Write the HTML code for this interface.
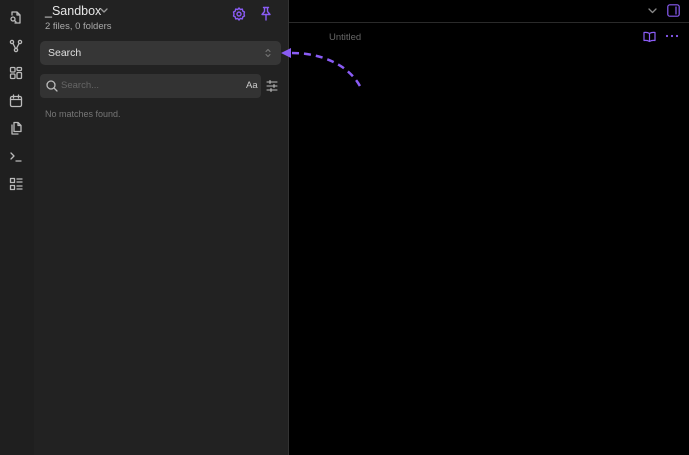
<html><head><style>
body{margin:0;width:689px;height:455px;background:#000;font-family:"Liberation Sans",sans-serif;position:relative;overflow:hidden}
.rib{position:absolute;left:0;top:0;width:34px;height:455px;background:#1f1f1f}
.pan{position:absolute;left:34px;top:0;width:254px;height:455px;background:#222}
.edge{position:absolute;left:288px;top:0;width:1px;height:455px;background:#333}
svg.i{position:absolute;fill:none;stroke:#bbb;stroke-width:1.3;stroke-linecap:round;stroke-linejoin:round}
.t{position:absolute;color:#ddd;white-space:nowrap;line-height:1}
</style></head><body>
<div class="rib"></div><div class="pan"></div><div class="edge"></div>
<div style="position:absolute;left:289px;top:22px;width:400px;height:1px;background:#2a2a2a"></div>
<svg class="i" style="left:9px;top:10px" width="14" height="14" viewBox="0 0 14 14"><path d="M3 5V2h5l3 3v8H6M8 2v3h3"/><circle cx="4" cy="9" r="2"/><path d="M5.5 10.5l1.5 1.5"/></svg>
<svg class="i" style="left:9px;top:39px" width="14" height="14" viewBox="0 0 14 14"><circle cx="3" cy="3" r="1.6"/><circle cx="11" cy="3" r="1.6"/><circle cx="7" cy="11" r="1.6"/><path d="M4 4.5l2.5 5M10 4.5l-2.5 5"/></svg>
<svg class="i" style="left:9px;top:66px" width="14" height="14" viewBox="0 0 14 14"><rect x="1.5" y="1.5" width="4.5" height="4.5" rx="1"/><rect x="8" y="1.5" width="4.5" height="3" rx="1"/><rect x="1.5" y="8" width="4.5" height="4.5" rx="1"/><rect x="8" y="6.5" width="4.5" height="6" rx="1"/></svg>
<svg class="i" style="left:9px;top:94px" width="14" height="14" viewBox="0 0 14 14"><rect x="1.5" y="2.5" width="11" height="10" rx="1.5"/><path d="M1.5 5.5h11M4.5 1v3M9.5 1v3"/></svg>
<svg class="i" style="left:9px;top:121px" width="14" height="14" viewBox="0 0 14 14"><path d="M5 1.5h4l3 3v6H5zM9 1.5v3h3M3 4v9h6"/></svg>
<svg class="i" style="left:9px;top:149px" width="14" height="14" viewBox="0 0 14 14"><path d="M2 4l3 3-3 3M7 12h5"/></svg>
<svg class="i" style="left:9px;top:177px" width="14" height="14" viewBox="0 0 14 14"><rect x="1.5" y="1.5" width="4" height="4"/><rect x="1.5" y="8.5" width="4" height="4"/><path d="M8 2h5M8 5h5M8 9h5M8 12h5"/></svg>
<div class="t" style="left:45px;top:5px;font-size:12.5px;color:#e6e6e6">_Sandbox</div>
<svg class="i" style="left:100px;top:8px;stroke:#999" width="8" height="6" viewBox="0 0 8 6"><path d="M1 1l3 3 3-3"/></svg>
<div class="t" style="left:45px;top:22px;font-size:9.5px;color:#aaa">2 files, 0 folders</div>
<svg class="i" style="left:232px;top:7px;stroke:#8a5cf5;stroke-width:1.4" width="14" height="14" viewBox="0 0 14 14"><circle cx="7" cy="7" r="2"/><path d="M7 1l1.3 1.6 2-.5.5 2L12.5 5 12 7l.5 2-1.7.9-.5 2-2-.5L7 13l-1.3-1.6-2 .5-.5-2L1.5 9 2 7l-.5-2 1.7-.9.5-2 2 .5z"/></svg>
<svg class="i" style="left:259px;top:6px;stroke:#8a5cf5;stroke-width:1.4" width="14" height="15" viewBox="0 0 14 15"><path d="M4.5 1.5h5M5.5 1.5v4L3 8.5h8L8.5 5.5v-4M7 8.5V14"/></svg>
<div style="position:absolute;left:40px;top:41px;width:241px;height:24px;background:#363636;border-radius:5px"></div>
<div class="t" style="left:48px;top:48px;font-size:10.5px;color:#e0e0e0">Search</div>
<svg class="i" style="left:265px;top:48px;stroke:#777;stroke-width:1" width="6" height="10" viewBox="0 0 6 10"><path d="M1 3.5L3 1.5 5 3.5M1 6.5L3 8.5 5 6.5"/></svg>
<div style="position:absolute;left:40px;top:74px;width:221px;height:24px;background:#333;border-radius:4px"></div>
<svg class="i" style="left:46px;top:80px;stroke:#bbb" width="12" height="12" viewBox="0 0 12 12"><circle cx="5" cy="5" r="4"/><path d="M8 8l3 3"/></svg>
<div class="t" style="left:61px;top:81px;font-size:9.5px;color:#666">Search...</div>
<div class="t" style="left:246px;top:81px;font-size:9.5px;color:#ccc">Aa</div>
<svg class="i" style="left:266px;top:80px;stroke:#bbb;stroke-width:1.1" width="12" height="12" viewBox="0 0 12 12"><path d="M1 2h10M1 6h10M1 10h10M4 0.5v3M8 4.5v3M5 8.5v3"/></svg>
<div class="t" style="left:45px;top:110px;font-size:9px;color:#777">No matches found.</div>
<div class="t" style="left:329px;top:33px;font-size:9.5px;color:#666">Untitled</div>
<svg class="i" style="left:648px;top:8px;stroke:#888" width="9" height="6" viewBox="0 0 9 6"><path d="M1 1l3.5 3.5L8 1"/></svg>
<svg class="i" style="left:667px;top:4px;stroke:#8a5cf5;stroke-width:1.2" width="13" height="13" viewBox="0 0 13 13"><rect x="0.8" y="0.8" width="11.4" height="11.4" rx="2"/><path d="M9 3v7"/></svg>
<svg class="i" style="left:643px;top:31px;stroke:#8a5cf5;stroke-width:1.2" width="13" height="12" viewBox="0 0 13 12"><path d="M6.5 2.5C5 1.5 3 1.2 1 1.5v8c2-.3 4 0 5.5 1 1.5-1 3.5-1.3 5.5-1v-8c-2-.3-4 0-5.5 1zM6.5 2.5v8"/></svg>
<svg style="position:absolute;left:665px;top:34px" width="14" height="4" viewBox="0 0 14 4"><circle cx="2" cy="2" r="1.1" fill="#8a5cf5"/><circle cx="7" cy="2" r="1.1" fill="#8a5cf5"/><circle cx="12" cy="2" r="1.1" fill="#8a5cf5"/></svg>
<svg style="position:absolute;left:280px;top:44px" width="90" height="50" viewBox="0 0 90 50"><path d="M12 9C40 9 70 20 82 46" fill="none" stroke="#8a5cf5" stroke-width="2.5" stroke-dasharray="7 5"/><path d="M1 9L11 4v10z" fill="#8a5cf5"/></svg>
</body></html>
